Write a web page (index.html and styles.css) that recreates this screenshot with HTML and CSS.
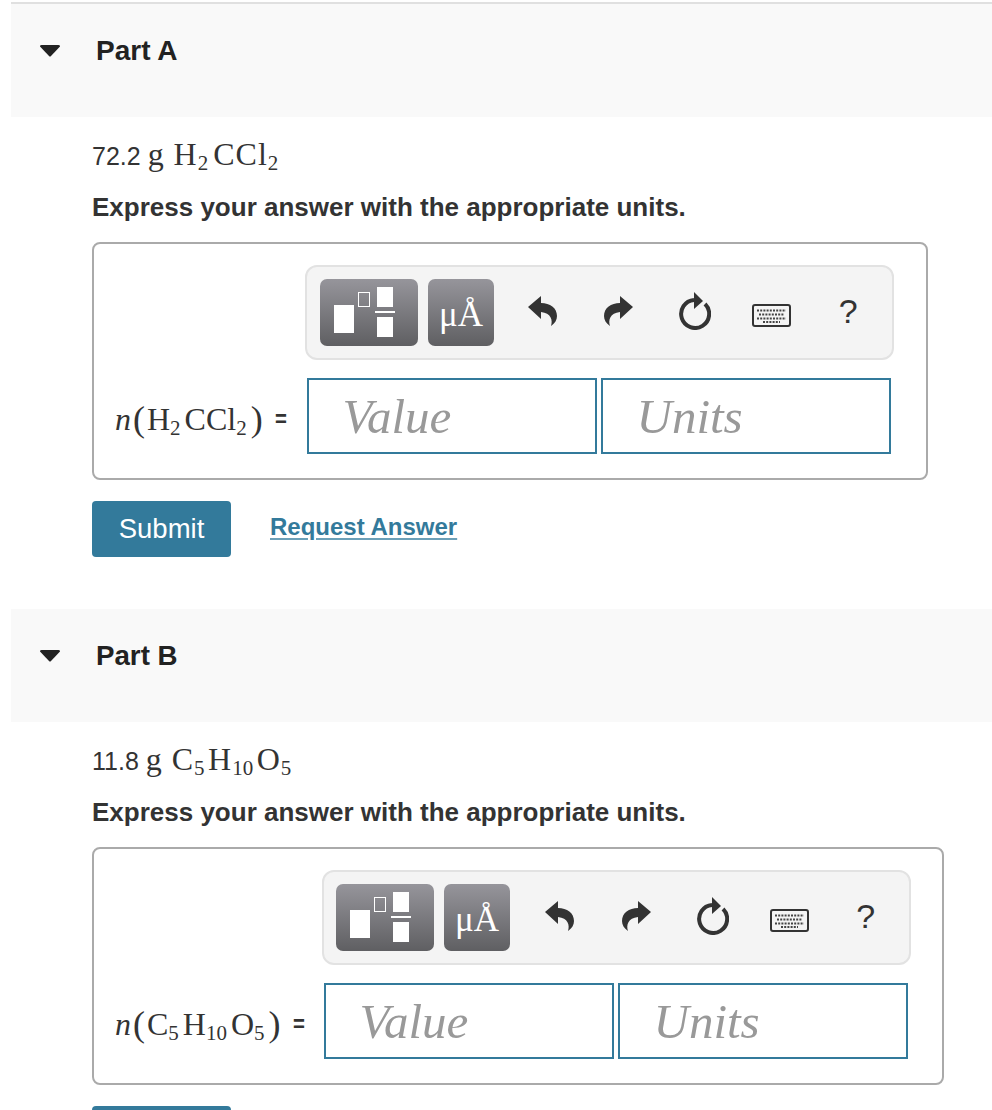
FILE: index.html
```html
<!DOCTYPE html>
<html lang="en">
<head>
<meta charset="utf-8">
<title>Parts</title>
<link rel="stylesheet" href="styles.css">
</head>
<body>
<main class="page">
  <section class="part part-a">
    <header class="part-head">
      <svg class="caret" width="22" height="12" viewBox="0 0 22 12"><path d="M1 1.5 Q0.5 0 2.5 0 H19.5 Q21.5 0 21 1.5 L12 11 Q11 12 10 11 Z"/></svg>
      <h2 class="part-title">Part A</h2>
    </header>
    <div class="part-body">
      <p class="problem"><span class="num">72.2</span> <span class="m">g</span> <span class="m h">H<sub>2</sub></span><span class="m">CCl<sub>2</sub></span></p>
      <p class="hint">Express your answer with the appropriate units.</p>
      <div class="answer answer-a">
        <div class="spacer"></div>
        <div class="toolbar">
          <button class="tbtn tbtn-tpl" type="button" aria-label="Templates">
            <svg width="98" height="66" viewBox="0 0 98 66"><rect x="14" y="25" width="20" height="28" fill="#fff"/><rect x="38.5" y="12.5" width="11" height="14" fill="none" stroke="#fff"/><rect x="57" y="7" width="16" height="20" fill="#fff"/><rect x="55" y="31" width="20" height="2" fill="#fff"/><rect x="57" y="37" width="16" height="20" fill="#fff"/></svg>
          </button>
          <button class="tbtn tbtn-sym" type="button">μÅ</button>
          <span class="tool"><svg width="29" height="31" viewBox="0 0 29 31"><path d="M0 12 L13 1 V8 C22 8 29 13 29 21 C29 25 27 28 23 31 C25 25 23 18 13 17 V24 Z"/></svg></span>
          <span class="tool"><svg width="29" height="31" viewBox="0 0 29 31"><path d="M29 12 L16 1 V8 C7 8 0 13 0 21 C0 25 2 28 6 31 C4 25 6 18 16 17 V24 Z"/></svg></span>
          <span class="tool"><svg width="32" height="38" viewBox="0 0 32 38"><path d="M15 8 A14 14 0 1 0 26 12" fill="none" stroke="#333" stroke-width="4"/><path d="M15 0 L24 9 L15 17 Z"/></svg></span>
          <span class="tool tool-kbd"><svg width="39" height="23" viewBox="0 0 39 23"><rect x="1" y="1" width="37" height="21" rx="2" fill="#f4f4f4" stroke="#333" stroke-width="2"/><path d="M5 6.500 H34 M7 10.500 H32 M5 14.500 H34 M11 18 H28" fill="none" stroke="#444" stroke-width="2" stroke-dasharray="2 1.200"/></svg></span>
          <span class="tool tool-help">?</span>
        </div>
        <div class="label"><span class="m i">n</span><span class="m paren">(</span><span class="m h">H<sub>2</sub></span><span class="m">CCl<sub>2</sub></span><span class="m paren paren-r">)</span><span class="eq">=</span></div>
        <div class="fields">
          <div class="field"><span class="ph">Value</span></div>
          <div class="field"><span class="ph">Units</span></div>
        </div>
      </div>
      <div class="actions">
        <button class="submit" type="button">Submit</button>
        <a class="request" href="#">Request Answer</a>
      </div>
    </div>
  </section>

  <section class="part part-b">
    <header class="part-head">
      <svg class="caret" width="22" height="12" viewBox="0 0 22 12"><path d="M1 1.5 Q0.5 0 2.5 0 H19.5 Q21.5 0 21 1.5 L12 11 Q11 12 10 11 Z"/></svg>
      <h2 class="part-title">Part B</h2>
    </header>
    <div class="part-body">
      <p class="problem"><span class="num">11.8</span> <span class="m">g</span> <span class="m h">C<sub>5</sub></span><span class="m h">H<sub>10</sub></span><span class="m">O<sub>5</sub></span></p>
      <p class="hint">Express your answer with the appropriate units.</p>
      <div class="answer answer-b">
        <div class="spacer"></div>
        <div class="toolbar">
          <button class="tbtn tbtn-tpl" type="button" aria-label="Templates">
            <svg width="98" height="66" viewBox="0 0 98 66"><rect x="14" y="25" width="20" height="28" fill="#fff"/><rect x="38.5" y="12.5" width="11" height="14" fill="none" stroke="#fff"/><rect x="57" y="7" width="16" height="20" fill="#fff"/><rect x="55" y="31" width="20" height="2" fill="#fff"/><rect x="57" y="37" width="16" height="20" fill="#fff"/></svg>
          </button>
          <button class="tbtn tbtn-sym" type="button">μÅ</button>
          <span class="tool"><svg width="29" height="31" viewBox="0 0 29 31"><path d="M0 12 L13 1 V8 C22 8 29 13 29 21 C29 25 27 28 23 31 C25 25 23 18 13 17 V24 Z"/></svg></span>
          <span class="tool"><svg width="29" height="31" viewBox="0 0 29 31"><path d="M29 12 L16 1 V8 C7 8 0 13 0 21 C0 25 2 28 6 31 C4 25 6 18 16 17 V24 Z"/></svg></span>
          <span class="tool"><svg width="32" height="38" viewBox="0 0 32 38"><path d="M15 8 A14 14 0 1 0 26 12" fill="none" stroke="#333" stroke-width="4"/><path d="M15 0 L24 9 L15 17 Z"/></svg></span>
          <span class="tool tool-kbd"><svg width="39" height="23" viewBox="0 0 39 23"><rect x="1" y="1" width="37" height="21" rx="2" fill="#f4f4f4" stroke="#333" stroke-width="2"/><path d="M5 6.500 H34 M7 10.500 H32 M5 14.500 H34 M11 18 H28" fill="none" stroke="#444" stroke-width="2" stroke-dasharray="2 1.200"/></svg></span>
          <span class="tool tool-help">?</span>
        </div>
        <div class="label"><span class="m i">n</span><span class="m paren">(</span><span class="m h">C<sub>5</sub></span><span class="m h">H<sub>10</sub></span><span class="m">O<sub>5</sub></span><span class="m paren paren-r">)</span><span class="eq">=</span></div>
        <div class="fields">
          <div class="field"><span class="ph">Value</span></div>
          <div class="field"><span class="ph">Units</span></div>
        </div>
      </div>
      <div class="actions">
        <button class="submit" type="button" aria-label="Submit"></button>
      </div>
    </div>
  </section>
</main>
</body>
</html>
```
FILE: styles.css
```css
* { box-sizing: border-box; }
html, body { margin: 0; height: 100%; overflow: hidden; background: #fff; }
body { font-family: "Liberation Sans", Arial, sans-serif; color: #333; }
.page { padding: 2px 0 0 11px; }

.part-head {
  height: 113px;
  background: #f9f9f9;
  display: flex;
  align-items: flex-start;
}
.part-a .part-head { height: 115px; border-top: 2px solid #e0e0e0; }
.part-b { margin-top: 52px; }
.caret { fill: #222; margin: 41px 0 0 28px; flex: none; }
.part-title {
  margin: 27px 0 0 35px;
  font-size: 28px;
  line-height: 40px;
  font-weight: 700;
  color: #222;
}
.part-b .part-title { font-size: 27.700px; }

.part-body { padding: 19px 0 0 81px; }
.problem {
  margin: 0;
  height: 36px;
  font-size: 25px;
  line-height: 36px;
  color: #333;
  white-space: nowrap;
}
.m {
  font-family: "Liberation Serif", "Times New Roman", serif;
  font-size: 32px;
  letter-spacing: 1px;
}
.m sub { font-size: 21px; line-height: 0; vertical-align: -5px; letter-spacing: 0; }
.problem .m:nth-child(2) { margin-right: 2px; }
.h { margin-right: 5px; }
.part-b .problem .h { margin-right: 3.500px; }
.i { font-style: italic; }
.hint {
  margin: 17px 0 0;
  font-size: 26px;
  line-height: 36px;
  font-weight: 700;
  color: #333;
  white-space: nowrap;
}

.answer {
  margin-top: 17px;
  height: 238px;
  border: 2px solid #aaa;
  border-radius: 8px;
  display: grid;
  grid-template-rows: 95px 76px;
  row-gap: 18px;
  padding-top: 21px;
  align-content: start;
}
.answer-a { width: 836px; grid-template-columns: 211px 589px; }
.answer-b { width: 852px; grid-template-columns: 228px 589px; }

.toolbar {
  background: #f4f4f4;
  border: 2px solid #e2e2e2;
  border-radius: 12px;
  padding: 12px 0 0 13px;
  display: flex;
  align-items: flex-start;
  gap: 10px;
}
.answer-b .toolbar { padding-left: 12px; }
.answer-b .tbtn-sym { margin-right: 1.500px; }
.tbtn {
  height: 67px;
  padding: 0;
  border: 0;
  border-radius: 7px;
  background: linear-gradient(#96959b, #5f5f62);
  color: #fff;
  flex: none;
}
.tbtn svg { display: block; }
.tbtn-tpl { width: 98px; }
.tbtn-sym {
  width: 66px;
  font-family: "Liberation Serif", serif;
  font-size: 35px;
  line-height: 72px;
}
.tool {
  width: 76.500px;
  height: 67px;
  padding-bottom: 4px;
  display: flex;
  align-items: center;
  justify-content: center;
  flex: none;
  margin-right: -10px;
  fill: #333;
}
.tool-kbd { padding: 5px 0 0; }
.tool-help { font-size: 34px; color: #333; padding-bottom: 2px; }

.label {
  grid-column: 1;
  grid-row: 2;
  display: flex;
  align-items: center;
  padding: 6px 0 0 21px;
  white-space: nowrap;
  color: #333;
}
.label .m { font-size: 32px; letter-spacing: 0; }
.label .i { margin-right: 2px; }
.label .paren { font-size: 36px; margin: 0 2px 0 0; }
.label .paren-r { margin: 0 0 0 4px; }
.label .h { margin-right: 4px; }
.eq { font-size: 24px; margin-left: 11px; font-weight: 700; transform: scaleX(.85); }

.fields {
  grid-column: 2;
  grid-row: 2;
  margin-left: 2px;
  display: flex;
  gap: 4px;
}
.field {
  width: 290px;
  height: 76px;
  border: 2px solid #337a9b;
  padding-left: 33.500px;
  display: flex;
  align-items: center;
}
.ph {
  font-family: "Liberation Serif", serif;
  font-style: italic;
  font-size: 49px;
  color: #999;
}

.actions {
  margin-top: 21px;
  display: flex;
  align-items: flex-start;
  gap: 39px;
}
.submit {
  width: 139px;
  height: 56px;
  padding: 0;
  border: 0;
  border-radius: 4px;
  background: #337a9b;
  color: #fff;
  font-family: "Liberation Sans", Arial, sans-serif;
  font-size: 27.500px;
}
.request {
  margin-top: 10px;
  font-size: 24px;
  line-height: 32px;
  font-weight: 700;
  color: #337a9b;
  text-decoration: underline;
  text-underline-offset: 3px;
  text-decoration-thickness: 2px;
  text-decoration-color: #6ba0b8;
}
```
